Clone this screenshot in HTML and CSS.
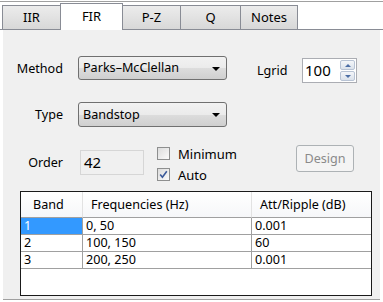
FILE: index.html
```html
<!DOCTYPE html>
<html lang="en">
<head>
    <meta charset="UTF-8">
    <meta name="viewport" content="width=device-width, initial-scale=1.0">
    <title>FIR Design</title>
    <link rel="stylesheet" href="styles.css">
</head>
<body>

<div class="window">
    <div class="tabs">
        <div class="tab tab-iir">IIR</div>
        <div class="tab tab-fir active">FIR</div>
        <div class="tab tab-pz">P-Z</div>
        <div class="tab tab-q">Q</div>
        <div class="tab tab-notes">Notes</div>
    </div>

    <div class="panel">
        <div class="row row-method">
            <span class="label">Method</span>
            <div class="combo">Parks&ndash;McClellan<span class="arrow"></span></div>
            <span class="label-lgrid">Lgrid</span>
            <div class="spin">
                <span class="spin-value">100</span>
                <div class="spin-btns">
                    <span class="spin-btn"><span class="tri-up"></span></span>
                    <span class="spin-btn"><span class="tri-down"></span></span>
                </div>
            </div>
        </div>

        <div class="row row-type">
            <span class="label">Type</span>
            <div class="combo">Bandstop<span class="arrow"></span></div>
        </div>

        <div class="row row-order">
            <span class="label">Order</span>
            <div class="order-box">42</div>
            <div class="checks">
                <label class="check">
                    <span class="box"></span>
                    <span>Minimum</span>
                </label>
                <label class="check">
                    <span class="box checked">
                        <svg width="9" height="9" viewBox="0 0 9 9">
                            <path d="M1.2 4.6 L3.4 7.2 L7.8 1.2" fill="none" stroke="#3b5a9a" stroke-width="1.6"/>
                        </svg>
                    </span>
                    <span>Auto</span>
                </label>
            </div>
            <button type="button" class="design" disabled>Design</button>
        </div>

        <div class="grid-wrap">
            <table class="bands">
                <colgroup>
                    <col class="col-band">
                    <col class="col-freq">
                    <col>
                </colgroup>
                <thead>
                    <tr>
                        <th class="th-band">Band</th>
                        <th>Frequencies (Hz)</th>
                        <th>Att/Ripple (dB)</th>
                    </tr>
                </thead>
                <tbody>
                    <tr>
                        <td class="selected">1</td>
                        <td>0, 50</td>
                        <td>0.001</td>
                    </tr>
                    <tr>
                        <td>2</td>
                        <td>100, 150</td>
                        <td>60</td>
                    </tr>
                    <tr>
                        <td>3</td>
                        <td>200, 250</td>
                        <td>0.001</td>
                    </tr>
                </tbody>
            </table>
        </div>
    </div>
</div>

</body>
</html>
```

FILE: styles.css
```css
body {
    margin: 0;
    background-color: #ffffff;
    font-family: "Noto Sans", "DejaVu Sans", sans-serif;
    font-size: 12.6px;
    color: #000000;
}

.window {
    width: 383px;
    height: 302px;
    padding-top: 1px;
    box-sizing: border-box;
}

/* tab strip */
.tabs {
    display: flex;
    align-items: flex-end;
    height: 27px;
    padding-left: 2px;
    border-top: 1px solid #a0a0a0;
    border-bottom: 1px solid #898c95;
}

.tab {
    box-sizing: border-box;
    height: 24px;
    line-height: 22px;
    text-align: center;
    font-size: 13px;
    border: 1px solid #898c95;
    border-bottom: none;
    margin-left: -1px;
    background: linear-gradient(#ececec, #d8d8d8);
}

.tab-iir { width: 59px; margin-left: 0; }
.tab-fir { width: 63px; }
.tab-pz { width: 59px; }
.tab-q { width: 61px; }
.tab-notes { width: 58px; }

.tab.active {
    position: relative;
    height: 27px;
    line-height: 24px;
    margin-bottom: -1px;
    background: #ffffff;
    z-index: 1;
}

/* page body */
.panel {
    margin: 0 3px;
    height: 270px;
    box-sizing: border-box;
    padding-top: 26px;
    background-color: #f0f0f0;
    border-bottom: 1px solid #a0a0a0;
}

.row {
    display: flex;
    align-items: flex-start;
}

.row-method {
    height: 24px;
}

.label {
    width: 60px;
    margin-right: 15px;
    text-align: right;
    line-height: 26px;
}

.combo {
    position: relative;
    box-sizing: border-box;
    width: 149px;
    height: 24px;
    line-height: 22px;
    padding-left: 4px;
    border: 1px solid #707070;
    border-radius: 3px;
    background: linear-gradient(#f2f2f2, #ebebeb 50%, #dddddd 50%, #cfcfcf);
}

.arrow {
    position: absolute;
    right: 6px;
    top: 10px;
    border-left: 4px solid transparent;
    border-right: 4px solid transparent;
    border-top: 4px solid #000000;
}

.label-lgrid {
    width: 45px;
    margin-left: 30px;
    line-height: 30px;
}

.spin {
    display: flex;
    box-sizing: border-box;
    width: 55px;
    height: 25px;
    margin-top: 2px;
    border: 1px solid #abadb3;
    background-color: #ffffff;
}

.spin-value {
    flex: 1;
    padding-left: 2px;
    font-size: 15px;
    line-height: 23px;
}

.spin-btns {
    display: flex;
    flex-direction: column;
    gap: 1px;
    width: 15px;
    padding: 1px 1px 1px 0;
}

.spin-btn {
    flex: 1;
    display: flex;
    align-items: center;
    justify-content: center;
    border: 1px solid #b8c3d4;
    border-radius: 2px;
    background: linear-gradient(#f4f6f9, #dbe2eb);
}

.tri-up {
    border-left: 3px solid transparent;
    border-right: 3px solid transparent;
    border-bottom: 3px solid #4c6ea5;
}

.tri-down {
    border-left: 3px solid transparent;
    border-right: 3px solid transparent;
    border-top: 3px solid #4c6ea5;
}

.row-type {
    margin-top: 22px;
}

.row-type .combo {
    height: 25px;
    line-height: 23px;
}

.row-order {
    margin-top: 17px;
    height: 35px;
}

.row-order .label {
    margin-right: 17px;
    line-height: 36px;
}

.order-box {
    box-sizing: border-box;
    width: 64px;
    height: 25px;
    margin-top: 5px;
    padding-left: 3px;
    font-size: 15px;
    line-height: 23px;
    border: 1px solid #d6d6d6;
    background-color: #f0f0f0;
}

.checks {
    display: flex;
    flex-direction: column;
    gap: 8px;
    width: 139px;
    margin-left: 13px;
    margin-top: 2px;
}

.check {
    display: flex;
    align-items: center;
    gap: 8px;
    height: 13px;
    font-size: 13px;
}

.box {
    display: flex;
    align-items: center;
    justify-content: center;
    box-sizing: border-box;
    width: 13px;
    height: 13px;
    border: 1px solid #8e8f8f;
    background: linear-gradient(135deg, #dcdcdc, #fbfbfb);
}

.design {
    box-sizing: border-box;
    width: 58px;
    height: 27px;
    padding: 0;
    font-family: inherit;
    font-size: 12.6px;
    color: #8a8a8a;
    border: 1px solid #adb2b5;
    border-radius: 3px;
    background-color: #f4f4f4;
}

/* band table */
.grid-wrap {
    box-sizing: border-box;
    width: 352px;
    height: 105px;
    margin-top: 11px;
    margin-left: 17px;
    border: 1px solid #1a1a1a;
    background-color: #ffffff;
}

.bands {
    width: 100%;
    table-layout: fixed;
    border-collapse: separate;
    border-spacing: 0;
}

.col-band { width: 62px; }
.col-freq { width: 169px; }

th {
    height: 25px;
    padding: 0 0 0 8px;
    text-align: left;
    font-weight: normal;
    line-height: 16px;
    border-bottom: 1px solid #a0a0a0;
    border-right: 1px solid #e2e2e2;
    background: linear-gradient(#ffffff, #f6f7f9);
}

th.th-band {
    padding-left: 12px;
}

th:last-child,
td:last-child {
    border-right: none;
}

td {
    height: 16px;
    padding: 0 0 0 3px;
    line-height: 16px;
    border-bottom: 1px solid #a0a0a0;
    border-right: 1px solid #a0a0a0;
}

td.selected {
    background-color: #3399ff;
    color: #ffffff;
}
```
